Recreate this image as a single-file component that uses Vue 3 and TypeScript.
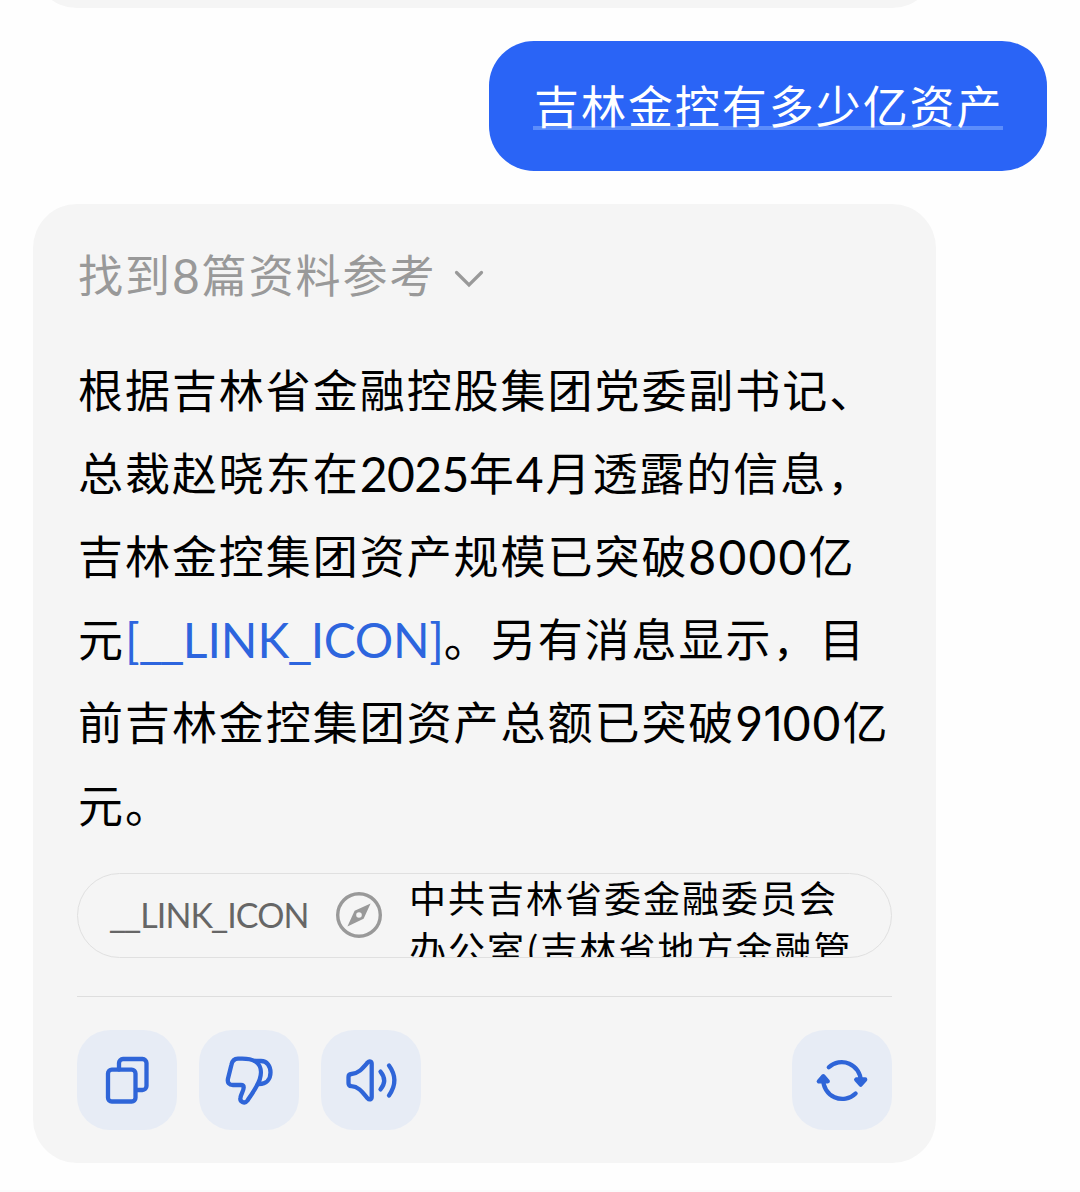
<script setup lang="ts">
interface Run {
  text: string
  kind: 'cjk' | 'num' | 'num one' | 'link' | 'link bar' | 'comma'
  spacing?: number
}

const question = '吉林金控有多少亿资产'

const answer: Run[][] = [
  [{ text: '根据吉林省金融控股集团党委副书记、', kind: 'cjk' }],
  [
    { text: '总裁赵晓东在', kind: 'cjk' },
    { text: '2025', kind: 'num', spacing: -0.6 },
    { text: '年', kind: 'cjk' },
    { text: '4', kind: 'num', spacing: 2 },
    { text: '月透露的信息', kind: 'cjk' },
    { text: '，', kind: 'comma' },
  ],
  [
    { text: '吉林金控集团资产规模已突破', kind: 'cjk' },
    { text: '8000', kind: 'num', spacing: 2.2 },
    { text: '亿', kind: 'cjk' },
  ],
  [
    { text: '元', kind: 'cjk' },
    { text: '[', kind: 'link', spacing: 0.5 },
    { text: '__', kind: 'link bar' },
    { text: 'LINK', kind: 'link', spacing: 0 },
    { text: '_', kind: 'link bar' },
    { text: 'ICON]', kind: 'link', spacing: -0.3 },
    { text: '。另有消息显示', kind: 'cjk' },
    { text: '，', kind: 'comma' },
    { text: '目', kind: 'cjk' },
  ],
  [
    { text: '前吉林金控集团资产总额已突破', kind: 'cjk' },
    { text: '9', kind: 'num', spacing: 0 },
    { text: '1', kind: 'num one', spacing: 0 },
    { text: '00', kind: 'num', spacing: 2 },
    { text: '亿', kind: 'cjk' },
  ],
  [{ text: '元。', kind: 'cjk' }],
]

const sourceLines = ['中共吉林省委金融委员会', '办公室(吉林省地方金融管']
</script>

<template>
  <main class="chat">
    <div class="previous"></div>
    <div class="bubble"><div class="question"><span>{{ question }}</span></div></div>

    <section class="card">
      <header class="refs">
        <span class="found">找到<span class="num">8</span>篇资料参考</span>
        <svg class="chevron" width="30" height="20" viewBox="0 0 30 20">
          <path d="M2.5 3.5 15 16 27.5 3.5" />
        </svg>
      </header>

      <div class="answer">
        <p v-for="(line, i) in answer" :key="i"><span
          v-for="(run, j) in line"
          :key="j"
          :class="run.kind"
          :style="run.spacing !== undefined ? { letterSpacing: run.spacing + 'px' } : undefined"
        >{{ run.text }}</span></p>
      </div>

      <div class="source">
        <span class="label"><span class="bar">__</span>LINK<span class="bar">_</span>ICON</span>
        <svg class="compass" width="48" height="48" viewBox="0 0 48 48">
          <circle cx="24" cy="24" r="21.3" />
          <path fill-rule="evenodd" d="M35.6 12.4 28.6 27.8 12.4 35.6 19.6 19.8ZM24 21.2a2.8 2.8 0 1 0 0 5.6 2.8 2.8 0 0 0 0-5.6Z" />
        </svg>
        <div class="title">
          <div v-for="line in sourceLines" :key="line">{{ line }}</div>
        </div>
      </div>

      <footer class="actions">
        <button aria-label="复制">
          <svg viewBox="0 0 100 100">
            <rect x="31" y="39.7" width="27.5" height="31.8" rx="3.8" />
            <path d="M42 39.5V33a4 4 0 0 1 4-4H65.500a4 4 0 0 1 4 4V56a4 4 0 0 1-4 4H59" />
          </svg>
        </button>
        <button aria-label="不喜欢">
          <svg viewBox="0 0 100 100">
            <path d="M32.500 34.500C33.300 30.500 35.500 28.900 39 28.700C45 28.300 51.500 28.500 56 31.200C61.500 34.500 63.300 41.500 60.700 49.500C58.500 56 53.500 63 48.500 70.500C45.500 74.500 40.500 71.500 41.500 67.500C42.300 63.500 44.500 61 44.700 57.500C44.700 55.600 43.600 55 42 55H34C30 55 28.300 52.500 28.900 49Z" />
            <path d="M56 31H62C68 31 71.500 36 71.500 42.500C71.500 49 67.500 54 60 54" />
          </svg>
        </button>
        <button aria-label="朗读">
          <svg viewBox="0 0 100 100">
            <path d="M27.500 47C27.500 45 28.500 44.200 30.500 44C37.500 43.600 41.500 38.500 46.600 32.500C48.400 30.600 50.700 31.300 50.700 33.800V67C50.700 69.500 48.400 70.300 46.600 68.300C41.500 62.300 37.500 56.500 30.500 56.200C28.500 56 27.500 55.200 27.500 53.200Z" />
            <path d="M59.500 41.600Q66.800 50.500 59.500 59.400" />
            <path d="M68 35.600Q78.800 50.500 68 65.400" />
          </svg>
        </button>
        <button class="refresh" aria-label="重新生成">
          <svg viewBox="0 0 100 100">
            <path d="M36.800 37.300A19 19 0 0 1 68.800 51M63.600 63.500A19 19 0 0 1 31.300 49" />
            <path class="solid" d="M64.200 49.500H73.200L68.700 54.600ZM26.800 51.300H35.800L31.300 46.200Z" />
          </svg>
        </button>
      </footer>
    </section>
    <div class="fade"></div>
  </main>
</template>

<style>
body {
  margin: 0;
  background: #fefefe;
}
</style>

<style scoped>
.chat {
  display: flex;
  flex-direction: column;
  box-sizing: border-box;
  width: 1080px;
  height: 1192px;
  overflow: hidden;
  background: #fefefe;
  font-family: 'Noto Sans CJK SC', sans-serif;
}
.previous {
  flex: none;
  width: 903px;
  height: 90px;
  margin: -82px 0 33px 33px;
  border-radius: 44px;
  background: #f5f5f5;
}
.bubble {
  flex: none;
  align-self: flex-end;
  box-sizing: border-box;
  width: 558px;
  height: 130px;
  margin-right: 33px;
  padding: 42px 0 0 44px;
  border-radius: 45px;
  background: #2a64f6;
  color: #fff;
}
.question {
  box-sizing: border-box;
  width: 470px;
  height: 47px;
  border-bottom: 4px solid #5c8dfb;
  font-size: 45px;
  line-height: 43px;
  letter-spacing: 1.95px;
  white-space: nowrap;
  text-indent: 1px;
}
.card {
  flex: none;
  box-sizing: border-box;
  width: 903px;
  height: 959px;
  margin: 33px 0 0 33px;
  padding: 28px 44px 0;
  border-radius: 44px;
  background: #f5f5f5;
}
.refs {
  display: flex;
  align-items: center;
  height: 84px;
  color: #999;
  font-size: 45px;
  letter-spacing: 1.95px;
  white-space: nowrap;
}
.found {
  margin: -2px 0 0 1px;
}
.chevron {
  margin: 10px 0 0 18px;
  fill: none;
  stroke: #999;
  stroke-width: 3.200;
  stroke-linecap: round;
}
.answer {
  height: 498px;
  margin: 31px 0 0 1px;
}
.answer p {
  height: 83px;
  margin: 0;
  color: #000;
  font-size: 45px;
  line-height: 83px;
  letter-spacing: 1.95px;
  white-space: nowrap;
}
.num,
.link {
  position: relative;
  top: 1px;
  font-family: Lato, sans-serif;
  font-size: 48px;
  line-height: 1;
}
.one {
  font-family: Inter, sans-serif;
}
.link {
  color: #2d65de;
}
.bar {
  font-family: 'Noto Sans', sans-serif;
  letter-spacing: 0;
}
.comma {
  margin: 0 7px 0 1px;
  font-size: 37px;
  font-weight: 500;
  line-height: 1;
}
.source {
  display: flex;
  box-sizing: border-box;
  height: 85px;
  margin-top: 28px;
  border: 1.500px solid #e0e0e0;
  border-radius: 43px;
  overflow: hidden;
}
.label {
  width: 198px;
  margin-left: 32px;
  color: #666;
  font-family: Lato, sans-serif;
  font-size: 34px;
  letter-spacing: -0.9px;
  line-height: 82px;
  white-space: nowrap;
}
.label .bar {
  letter-spacing: 0;
}
.compass {
  flex: none;
  margin: 17px 0 0 27px;
  fill: #999;
}
.compass circle {
  fill: none;
  stroke: #999;
  stroke-width: 3.400;
}
.title {
  margin: -2px 0 0 26px;
  color: #000;
  font-size: 37px;
  line-height: 51px;
  letter-spacing: 2px;
  white-space: nowrap;
}
.actions {
  display: flex;
  gap: 22px;
  margin-top: 38px;
  padding-top: 33px;
  border-top: 1.500px solid #dedede;
}
button {
  width: 100px;
  height: 100px;
  padding: 0;
  border: 0;
  border-radius: 33px;
  background: #e7ecf5;
}
button svg {
  display: block;
  width: 100px;
  height: 100px;
  fill: none;
  stroke: #2f65d8;
  stroke-width: 4.300;
  stroke-linecap: round;
  stroke-linejoin: round;
}
.solid {
  fill: #2f65d8;
}
.refresh {
  margin-left: auto;
}
.fade {
  flex: none;
  height: 2px;
  margin-top: 27px;
  background: #fbfbfb;
}
</style>
